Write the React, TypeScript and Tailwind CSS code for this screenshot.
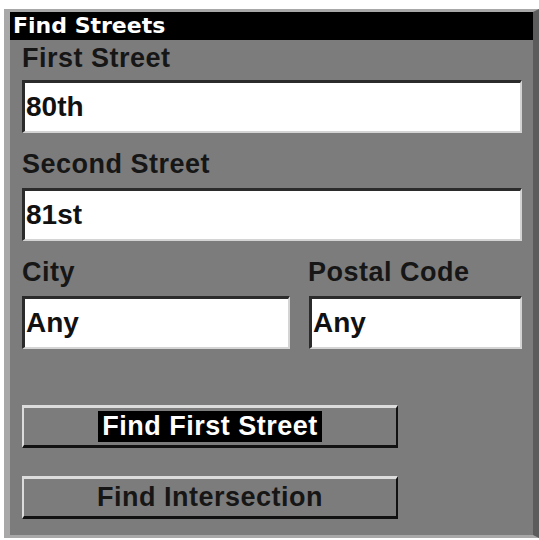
import React from "react";

const labelCls =
  "block h-[27px] text-[27px] leading-[27px] font-bold tracking-[0.5px] text-[#161616] whitespace-nowrap";

function TextBox({ value, className }: { value: string; className?: string }) {
  return (
    <div
      className={`flex h-[53px] items-center bg-white border-t-[3px] border-l-[3px] border-t-[#2b2b2b] border-l-[#2b2b2b] border-r-2 border-b-2 border-r-[#d4d4d4] border-b-[#d4d4d4] pl-[1px] ${className ?? ""}`}
    >
      <span className="text-[28px] leading-[28px] font-bold text-[#111]">{value}</span>
    </div>
  );
}

function Button({ label, focused }: { label: string; focused?: boolean }) {
  return (
    <div className="flex h-[43px] w-[376px] items-center justify-center bg-[#7c7c7c] border-t-[3px] border-l-2 border-t-[#dcdcdc] border-l-[#dcdcdc] border-b-[3px] border-r-2 border-b-[#111] border-r-[#111]">
      <span
        className={`h-[31px] px-[4px] text-[27px] leading-[31px] font-bold tracking-[0.5px] whitespace-nowrap ${
          focused ? "bg-black text-white" : "text-[#161616]"
        }`}
      >
        {label}
      </span>
    </div>
  );
}

export default function App() {
  return (
    <div
      className="w-[539px] h-[540px] bg-white pt-[9px] pl-[4px]"
      style={{ fontFamily: '"Liberation Sans", Arial, sans-serif' }}
    >
      <div className="w-[535px] h-[529px] bg-[#7c7c7c] border-t-[3px] border-l-[6px] border-b-[3px] border-r-[6px] border-t-[#a8a8a8] border-l-[#a8a8a8] border-b-[#a8a8a8] border-r-[#5c5c5c]">
        {/* title bar */}
        <div className="h-[28px] bg-black pl-[3px] flex items-center">
          <span
            className="text-[22px] leading-[22px] font-bold text-white"
            style={{ fontFamily: '"DejaVu Sans", sans-serif' }}
          >
            Find Streets
          </span>
        </div>

        <div className="pl-[12px] pr-[11px]">
          <span className={`${labelCls} mt-[5px]`}>First Street</span>
          <TextBox value="80th" className="mt-[8px] h-[52px]" />

          <span className={`${labelCls} mt-[18px]`}>Second Street</span>
          <TextBox value="81st" className="mt-[10px]" />

          <div className="mt-[18px] grid grid-cols-[268px_213px] gap-x-[19px]">
            <span className={labelCls}>City</span>
            <span className={`${labelCls} -ml-[1px]`}>Postal Code</span>
            <TextBox value="Any" className="mt-[10px]" />
            <TextBox value="Any" className="mt-[10px]" />
          </div>

          <div className="mt-[56px] flex flex-col gap-[28px]">
            <Button label="Find First Street" focused />
            <Button label="Find Intersection" />
          </div>
        </div>
      </div>
    </div>
  );
}
